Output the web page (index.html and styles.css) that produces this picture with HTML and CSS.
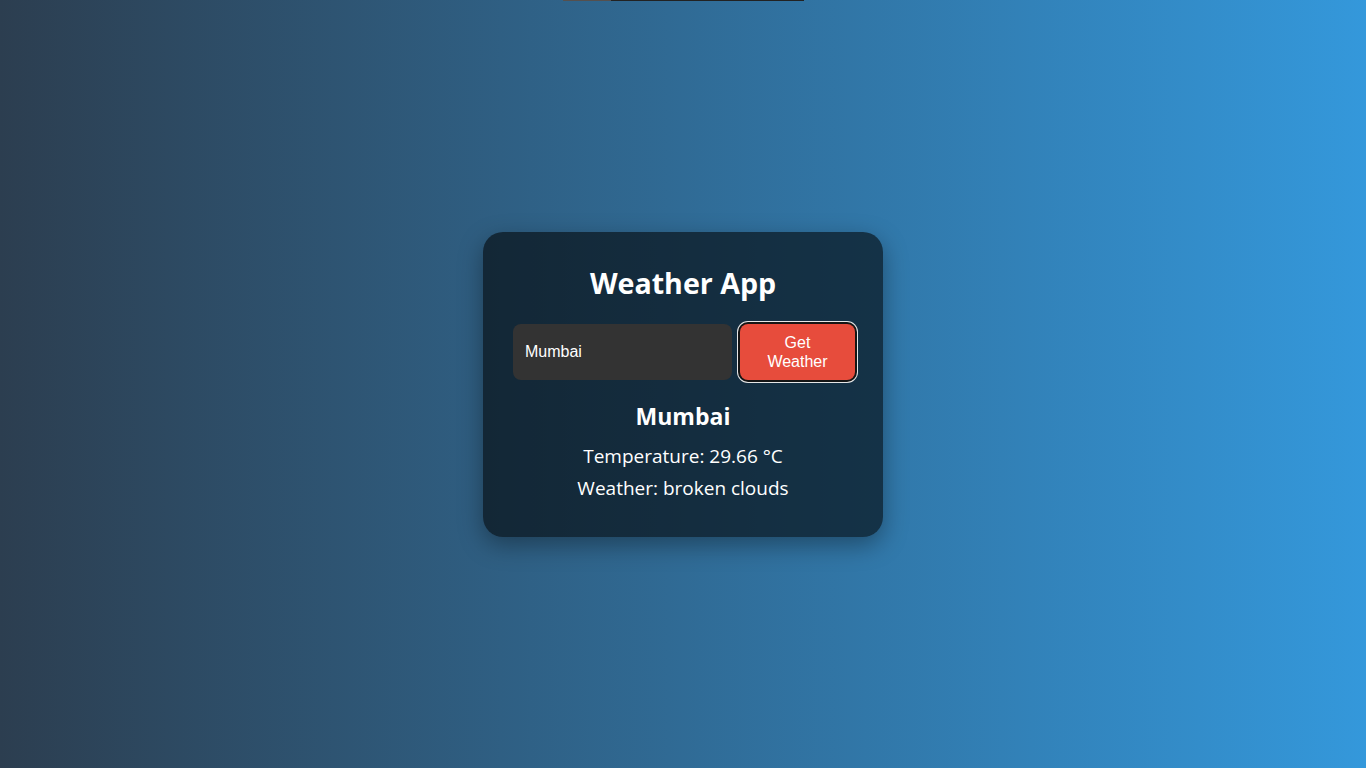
FILE: index.html
```html
<!DOCTYPE html>
<html lang="en">
<head>
<meta charset="UTF-8">
<title>Weather App</title>
<link rel="stylesheet" href="styles.css">
</head>
<body>
<div class="top-strip"><span class="strip-a"></span><span class="strip-b"></span></div>
<main class="card">
  <h2 class="title">Weather App</h2>
  <form class="search">
    <input class="city-input" type="text" value="Mumbai">
    <button class="get-btn" type="button">Get Weather</button>
  </form>
  <section class="result">
    <h3 class="city">Mumbai</h3>
    <p class="line">Temperature: 29.66 °C</p>
    <p class="line">Weather: broken clouds</p>
  </section>
</main>
</body>
</html>
```

FILE: styles.css
```css
html, body {
  margin: 0;
  padding: 0;
  height: 100%;
}
body {
  background: linear-gradient(to right, #2c3e50, #3498db);
  display: flex;
  align-items: center;
  justify-content: center;
  font-family: "Open Sans", "DejaVu Sans", sans-serif;
  color: #fff;
}
.top-strip {
  position: absolute;
  top: 0;
  left: 563px;
  display: flex;
  height: 1px;
}
.strip-a { width: 48px; background: #55504e; }
.strip-b { width: 193px; background: #222; }
.card {
  box-sizing: border-box;
  width: 400px;
  height: 305px;
  padding: 30px;
  border-radius: 20px;
  background: rgba(0, 0, 0, 0.58);
  box-shadow: 0 8px 24px rgba(0, 0, 0, 0.35);
  text-align: center;
}
.title {
  margin: 0 0 20px;
  font-size: 28.6px;
  line-height: 42px;
  font-weight: 700;
}
.search {
  display: flex;
  gap: 8px;
  margin: 0 -2px 20px 0;
}
.city-input {
  flex: 1;
  min-width: 0;
  height: 56px;
  box-sizing: border-box;
  border: none;
  border-radius: 8px;
  background: #333;
  color: #fff;
  padding: 0 12px;
  font-family: "Liberation Sans", Arial, sans-serif;
  font-size: 16px;
  outline: none;
}
.get-btn {
  width: 115px;
  height: 56px;
  box-sizing: border-box;
  border: none;
  border-radius: 8px;
  background: #e74c3c;
  color: #fff;
  font-family: "Liberation Sans", Arial, sans-serif;
  font-size: 16px;
  line-height: 19px;
  padding: 0 22px;
  box-shadow: 0 0 0 2px #151515, 0 0 0 3px #e6e6e6;
}
.city {
  margin: 0 0 10px;
  font-size: 23px;
  line-height: 33px;
  font-weight: 700;
}
.line {
  margin: 0 0 5px;
  font-size: 19px;
  line-height: 27px;
}
```
